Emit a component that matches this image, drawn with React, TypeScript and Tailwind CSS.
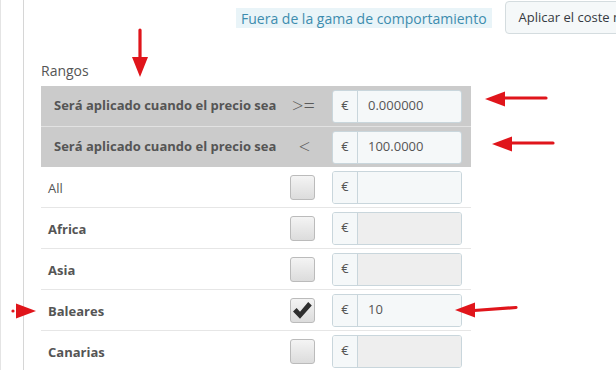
import { Fragment } from 'react'

const zones = [
  { name: 'All', bold: false, checked: false, enabled: true, value: '' },
  { name: 'Africa', bold: true, checked: false, enabled: false, value: '' },
  { name: 'Asia', bold: true, checked: false, enabled: false, value: '' },
  { name: 'Baleares', bold: true, checked: true, enabled: true, value: '10' },
  { name: 'Canarias', bold: true, checked: false, enabled: false, value: '' },
]

function PriceInput({ value, enabled = true }: { value: string; enabled?: boolean }) {
  return (
    <div className="flex h-[33px] w-[130px] rounded-[3px] border border-[#c9d6dc] overflow-hidden">
      <div className="flex w-[25px] items-center justify-center border-r border-[#c9d6dc] bg-[#f5f8f9] text-[13px] text-[#555]">
        €
      </div>
      <div
        className={`flex flex-1 items-center pl-[10px] text-[13px] text-[#555] ${
          enabled ? 'bg-[#f5f8f9]' : 'bg-[#eeeeee]'
        }`}
      >
        {value}
      </div>
    </div>
  )
}

function Checkbox({ checked }: { checked: boolean }) {
  return (
    <div className="flex h-[25px] w-[25px] items-center justify-center rounded-[3px] border border-[#bbb] bg-gradient-to-b from-[#f4f4f4] to-[#dcdcdc]">
      {checked && (
        <svg width="21" height="19" viewBox="0 0 21 19">
          <path d="M1 10.5 L4.6 7 L8 10.8 L16.2 1 L19.8 4.4 L8 17.8 Z" fill="#2f2f2f" />
        </svg>
      )}
    </div>
  )
}

function LeftArrow({ className, tilt = 0 }: { className: string; tilt?: number }) {
  return (
    <svg className={`absolute ${className}`} width="64" height="18" viewBox="0 0 64 18">
      <path d={`M20 ${8 + tilt / 2} L62 ${8 - tilt / 2}`} stroke="#e0151b" strokeWidth="3.2" strokeLinecap="round" />
      <path d="M1 9 L21 1.5 L21 16.5 Z" fill="#e0151b" />
    </svg>
  )
}

export default function App() {
  return (
    <div className="relative flex h-[370px] w-[616px] overflow-hidden bg-white font-['Open_Sans',sans-serif] text-[#555]">
      {/* side strip */}
      <div className="w-[24px] shrink-0 border-l border-r border-l-[#e4e4e4] border-r-[#d6d6d6] bg-white" />

      <div className="flex-1 pl-[17px]">
        {/* top bar */}
        <div className="flex items-start">
          <div className="ml-[195px] mt-[8px] flex h-[20px] items-center whitespace-nowrap bg-[#e9f4f8] px-[5px] text-[14px] text-[#3d8cae]">
            Fuera de la gama de comportamiento
          </div>
          <div className="ml-[13px] mt-[1px] flex h-[33px] shrink-0 items-center whitespace-nowrap rounded-[4px] border border-[#d4dcdf] bg-[#f5f8f9] pl-[13px] pr-4 text-[13px] text-[#363a41]">
            Aplicar el coste más alto
          </div>
        </div>

        <div className="mt-[27px] text-[14px] leading-[20px] text-[#555]">Rangos</div>

        {/* ranges table */}
        <div className="mt-[5px] w-[430px]">
          {[
            { op: '>=', value: '0.000000' },
            { op: '<', value: '100.0000' },
          ].map((r, i) => (
            <Fragment key={r.op}>
              {i > 0 && <div className="h-px bg-[#e2e2e2]" />}
              <div className="flex h-[40px] items-center bg-[#cbcbcb]">
                <div className="w-[239px] whitespace-nowrap pl-[13px] text-[13px] font-bold text-[#555]">
                  Será aplicado cuando el precio sea
                </div>
                <div className="flex w-[45px] justify-center text-[20px] font-light leading-none text-[#5a5a5a]">
                  <span className={r.op === '<' ? 'pl-[4px]' : 'pl-[2px]'}>{r.op}</span>
                </div>
                <div className="ml-[7px]">
                  <PriceInput value={r.value} />
                </div>
              </div>
            </Fragment>
          ))}

          {zones.map((z) => (
            <div key={z.name} className="flex h-[41px] items-center border-b border-[#e6e6e6]">
              <div className={`w-[239px] pl-[7px] pt-[4px] text-[13px] text-[#555] ${z.bold ? 'font-bold' : ''}`}>
                {z.name}
              </div>
              <div className="flex w-[45px] justify-center">
                <Checkbox checked={z.checked} />
              </div>
              <div className="ml-[7px]">
                <PriceInput value={z.value} enabled={z.enabled} />
              </div>
            </div>
          ))}
        </div>
      </div>

      {/* annotation arrows */}
      <svg className="absolute left-[130px] top-[28px]" width="20" height="50" viewBox="0 0 20 50">
        <path d="M10 2 L10 30" stroke="#e0151b" strokeWidth="3.2" strokeLinecap="round" />
        <path d="M2 29 L18 29 L10 49 Z" fill="#e0151b" />
      </svg>
      <LeftArrow className="left-[484px] top-[90px]" />
      <LeftArrow className="left-[491px] top-[135px]" />
      <LeftArrow className="left-[454px] top-[301px]" tilt={3} />
      <svg className="absolute left-[9px] top-[302px]" width="28" height="18" viewBox="0 0 28 18">
        <circle cx="4" cy="9" r="1.6" fill="#e0151b" />
        <path d="M27 9 L7 1.5 L7 16.5 Z" fill="#e0151b" />
      </svg>
    </div>
  )
}
